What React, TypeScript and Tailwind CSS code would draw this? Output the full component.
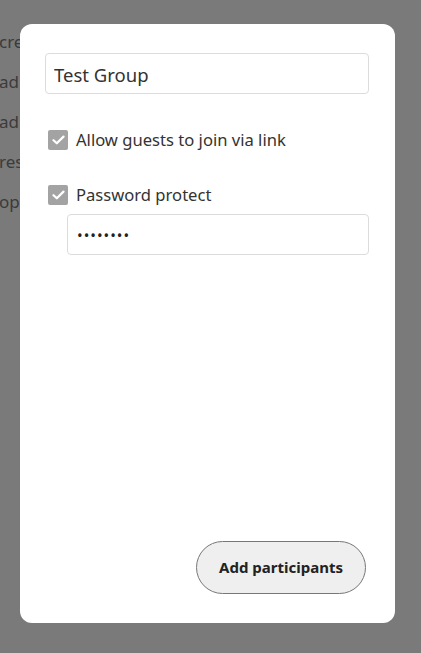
import React, { useState } from "react";

const behindLines = ["cre", "ad", "ad", "res", "op"];

function Check({ checked, onChange }: { checked: boolean; onChange: () => void }) {
  return (
    <button
      type="button"
      onClick={onChange}
      className="flex h-[20px] w-[20px] shrink-0 items-center justify-center rounded-[2px] bg-[#a3a3a3]"
    >
      {checked && (
        <svg width="13" height="10" viewBox="0 0 13 10" fill="none">
          <path d="M1.5 5.2 L4.8 8.3 L11.5 1.6" stroke="white" strokeWidth="2.2" strokeLinecap="round" strokeLinejoin="round" />
        </svg>
      )}
    </button>
  );
}

export default function App() {
  const [name, setName] = useState("Test Group");
  const [guests, setGuests] = useState(true);
  const [protect, setProtect] = useState(true);
  const [password, setPassword] = useState("12345678");

  return (
    <div
      className="flex h-[653px] w-[421px] overflow-hidden bg-[#7a7a7a]"
      style={{ fontFamily: '"Noto Sans", "Open Sans", sans-serif' }}
    >
      {/* page behind the overlay */}
      <div className="w-[20px] shrink-0 overflow-hidden pt-[22px] text-[17px] text-[#3b3b3b]">
        {behindLines.map((line, i) => (
          <div key={i} className="-ml-[1px] flex h-[40px] items-center whitespace-nowrap">
            {line}
          </div>
        ))}
      </div>

      <div className="mt-[24px] flex h-[599px] w-[375px] shrink-0 flex-col rounded-[12px] bg-white pb-[29px] pl-[25px] pr-[26px] pt-[29px]">
        <input
          value={name}
          onChange={(e) => setName(e.target.value)}
          className="h-[41px] w-full rounded-[4px] border border-[#dcdcdc] px-[8px] pt-[2px] text-[18.5px] text-[#333] outline-none"
        />

        <label className="ml-[3px] mt-[36px] flex h-[20px] items-center gap-[8px] text-[16.6px] text-[#333]">
          <Check checked={guests} onChange={() => setGuests(!guests)} />
          <span>Allow guests to join via link</span>
        </label>

        <label className="ml-[3px] mt-[35px] flex h-[20px] items-center gap-[8px] text-[16.6px] text-[#333]">
          <Check checked={protect} onChange={() => setProtect(!protect)} />
          <span>Password protect</span>
        </label>

        {protect && (
          <input
            type="password"
            value={password}
            onChange={(e) => setPassword(e.target.value)}
            className="ml-[22px] mt-[9px] h-[41px] rounded-[4px] border border-[#dcdcdc] px-[9px] text-[15px] tracking-[1px] text-[#222] outline-none"
          />
        )}

        <div className="flex-1" />

        <button
          type="button"
          className="mr-[3px] h-[53px] w-[170px] self-end rounded-full border border-[#777] bg-[#efefef] text-[15px] font-bold text-[#222]"
        >
          Add participants
        </button>
      </div>
    </div>
  );
}
